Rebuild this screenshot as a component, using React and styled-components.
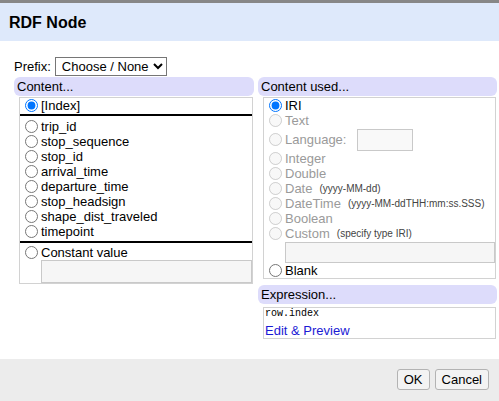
import React from "react";
import styled, { createGlobalStyle } from "styled-components";

const Global = createGlobalStyle`
  html, body { margin: 0; padding: 0; background: #fff; }
  body { font-family: "Liberation Sans", Arial, sans-serif; font-size: 13px; color: #000; }
  * { box-sizing: border-box; }
`;

const Page = styled.div`
  width: 499px;
  height: 401px;
  overflow: hidden;
  display: flex;
  flex-direction: column;
  border-top: 3px solid #878787;
`;

const Header = styled.div`
  height: 38px;
  background: #dee9fb;
  display: flex;
  align-items: center;
  padding-left: 9px;
`;

const Title = styled.h1`
  margin: 0;
  font-size: 16px;
  font-weight: bold;
  line-height: 19px;
`;

const Body = styled.div`
  height: 318px;
  padding: 16px 2px 0 14px;
`;

const PrefixRow = styled.div`
  display: flex;
  align-items: center;
  gap: 4px;
  height: 19px;
`;

const Select = styled.select`
  font-family: "Liberation Sans", Arial, sans-serif;
  font-size: 13px;
  width: 112px;
  height: 19px;
  padding: 0 0 0 2px;
  margin: 0;
  color: #000;
  background: #fff;
`;

const Columns = styled.div`
  display: grid;
  grid-template-columns: 240px 239px;
  column-gap: 4px;
  margin-top: 1px;
  align-items: start;
`;

const Column = styled.div`
  display: flex;
  flex-direction: column;
`;

const SectionHeader = styled.div`
  height: 19px;
  line-height: 19px;
  padding-left: 3px;
  background: #dddcfb;
  border-radius: 6px;
  margin-top: ${(p) => p.$top || 0}px;
`;

const OptionBox = styled.div`
  margin: 1px 1px 0 5px;
  border: 1px solid #d2d2d2;
  display: flex;
  flex-direction: column;
`;

const Group = styled.div`
  padding-top: ${(p) => p.$padTop || 0}px;
  padding-bottom: ${(p) => p.$padBottom || 0}px;
  border-bottom: ${(p) => (p.$divider ? "2px solid #000" : "none")};
`;

const Row = styled.label`
  display: flex;
  align-items: center;
  height: ${(p) => p.$h || 15}px;
  line-height: 15px;
  white-space: nowrap;
  color: ${(p) => (p.$disabled ? "#9a9a9a" : "#000")};
`;

const Radio = styled.input.attrs({ type: "radio" })`
  width: 13px;
  height: 13px;
  margin: 0 3px 0 5px;
  flex: none;
`;

const Hint = styled.span`
  font-size: 10px;
  color: #444;
  margin-left: 7px;
`;

const FieldInput = styled.input`
  display: block;
  margin: ${(p) => p.$mt || 0}px 0 0 21px;
  width: calc(100% - 21px);
  height: ${(p) => p.$h}px;
  border: 1px solid #c9c9c9;
  background: #f6f6f6;
  padding: 0 2px;
  font-family: inherit;
  font-size: 13px;
`;

const LangInput = styled.input`
  margin-left: 11px;
  width: 56px;
  height: 22px;
  border: 1px solid #c9c9c9;
  background: #f9f9f9;
  padding: 0 2px;
`;

const ExpressionBox = styled.div`
  margin: 3px 1px 0 5px;
  border: 1px solid #d2d2d2;
  padding: 0 1px;
`;

const Code = styled.div`
  font-family: "Liberation Mono", "DejaVu Sans Mono", monospace;
  font-size: 10px;
  line-height: 12px;
`;

const Link = styled.a`
  display: block;
  margin-top: 3px;
  line-height: 15px;
  color: #1a1ad4;
  text-decoration: none;
  cursor: pointer;
`;

const Footer = styled.div`
  flex: 1;
  background: #ececec;
  display: flex;
  justify-content: flex-end;
  align-items: flex-start;
  gap: 5px;
  padding: 10px 10px 0 0;
`;

const Button = styled.button`
  height: 21px;
  padding: 0 6px;
  font-family: "Liberation Sans", Arial, sans-serif;
  font-size: 13px;
  color: #000;
  background: #f3f3f3;
  border: 1px solid #b3b3b3;
  border-radius: 3px;
`;

const columnsA = [
  "trip_id",
  "stop_sequence",
  "stop_id",
  "arrival_time",
  "departure_time",
  "stop_headsign",
  "shape_dist_traveled",
  "timepoint",
];

export default function App() {
  return (
    <>
      <Global />
      <Page>
        <Header>
          <Title>RDF Node</Title>
        </Header>
        <Body>
          <PrefixRow>
            <span>Prefix:</span>
            <Select defaultValue="none">
              <option value="none">Choose / None</option>
            </Select>
          </PrefixRow>
          <Columns>
            <Column>
              <SectionHeader>Content...</SectionHeader>
              <OptionBox>
                <Group $divider $padBottom={1}>
                  <Row>
                    <Radio name="content" defaultChecked />
                    [Index]
                  </Row>
                </Group>
                <Group $divider $padTop={3} $padBottom={2}>
                  {columnsA.map((c) => (
                    <Row key={c}>
                      <Radio name="content" />
                      {c}
                    </Row>
                  ))}
                </Group>
                <Group $padTop={2}>
                  <Row>
                    <Radio name="content" />
                    Constant value
                  </Row>
                  <FieldInput $h={23} />
                </Group>
              </OptionBox>
            </Column>
            <Column>
              <SectionHeader>Content used...</SectionHeader>
              <OptionBox>
                <Row>
                  <Radio name="used" defaultChecked />
                  IRI
                </Row>
                <Row $disabled>
                  <Radio name="used" disabled />
                  Text
                </Row>
                <Row $disabled $h={23}>
                  <Radio name="used" disabled />
                  Language:
                  <LangInput disabled />
                </Row>
                <Row $disabled>
                  <Radio name="used" disabled />
                  Integer
                </Row>
                <Row $disabled>
                  <Radio name="used" disabled />
                  Double
                </Row>
                <Row $disabled>
                  <Radio name="used" disabled />
                  Date<Hint>(yyyy-MM-dd)</Hint>
                </Row>
                <Row $disabled>
                  <Radio name="used" disabled />
                  DateTime<Hint>(yyyy-MM-ddTHH:mm:ss.SSS)</Hint>
                </Row>
                <Row $disabled>
                  <Radio name="used" disabled />
                  Boolean
                </Row>
                <Row $disabled>
                  <Radio name="used" disabled />
                  Custom<Hint>(specify type IRI)</Hint>
                </Row>
                <FieldInput $h={21} $mt={1} disabled />
                <Row>
                  <Radio name="used" />
                  Blank
                </Row>
              </OptionBox>
              <SectionHeader $top={6}>Expression...</SectionHeader>
              <ExpressionBox>
                <Code>row.index</Code>
                <Link>Edit &amp; Preview</Link>
              </ExpressionBox>
            </Column>
          </Columns>
        </Body>
        <Footer>
          <Button>OK</Button>
          <Button>Cancel</Button>
        </Footer>
      </Page>
    </>
  );
}
